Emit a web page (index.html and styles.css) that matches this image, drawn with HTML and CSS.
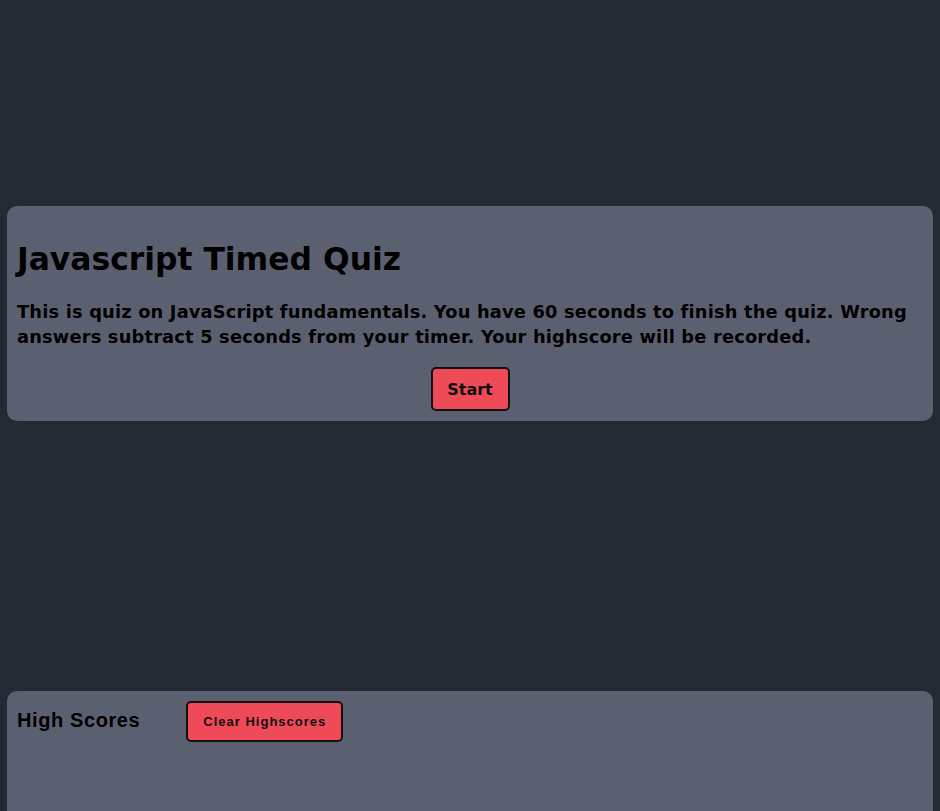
FILE: index.html
```html
<!DOCTYPE html>
<html lang="en">
<head>
<meta charset="utf-8">
<title>Javascript Timed Quiz</title>
<link rel="stylesheet" href="styles.css">
</head>
<body>
<main class="page">
  <section class="card intro">
    <h1 class="title">Javascript Timed Quiz</h1>
    <p class="lead">This is quiz on JavaScript fundamentals. You have 60 seconds to finish the quiz. Wrong answers subtract 5 seconds from your timer. Your highscore will be recorded.</p>
    <div class="actions">
      <button class="btn btn-start" type="button">Start</button>
    </div>
  </section>
  <section class="card scores">
    <div class="scores-head">
      <h3 class="scores-title">High Scores</h3>
      <button class="btn btn-clear" type="button">Clear Highscores</button>
    </div>
  </section>
</main>
</body>
</html>
```
FILE: styles.css
```css
html, body {
  margin: 0;
  padding: 0;
  background: #252934;
  overflow: hidden;
}

.page {
  padding: 206px 7px 0;
  display: flex;
  flex-direction: column;
}

.card {
  background: #5b6071;
  border-radius: 10px;
  color: #000;
}

.intro {
  padding: 0 10px 10px;
}

.title {
  font-family: "DejaVu Sans", "Noto Sans", sans-serif;
  font-weight: 700;
  font-size: 31.4px;
  line-height: 40px;
  margin: 33px 0 0;
  letter-spacing: 0;
}

.lead {
  font-family: "DejaVu Sans", "Noto Sans", sans-serif;
  font-weight: 700;
  font-size: 17.8px;
  line-height: 25px;
  margin: 20px 0 0;
  letter-spacing: 0.2px;
}

.actions {
  display: flex;
  justify-content: center;
  margin-top: 18px;
}

.btn {
  background: #ee4a57;
  border: 2px solid #111;
  border-radius: 5px;
  color: #111;
  cursor: pointer;
  font-weight: 700;
}

.btn-start {
  width: 79px;
  height: 44px;
  font-family: "DejaVu Sans", "Noto Sans", sans-serif;
  font-weight: 700;
  font-size: 16px;
}

.scores {
  margin-top: 270px;
  min-height: 130px;
  padding: 10px 10px;
}

.scores-head {
  display: flex;
  align-items: flex-start;
  gap: 46px;
}

.scores-title {
  font-family: "Liberation Sans", Arial, sans-serif;
  font-weight: 700;
  font-size: 20px;
  letter-spacing: 0.6px;
  margin: 8px 0 0;
}

.btn-clear {
  width: 157px;
  height: 41px;
  font-family: "Liberation Sans", Arial, sans-serif;
  font-size: 13px;
  letter-spacing: 1px;
}
```
